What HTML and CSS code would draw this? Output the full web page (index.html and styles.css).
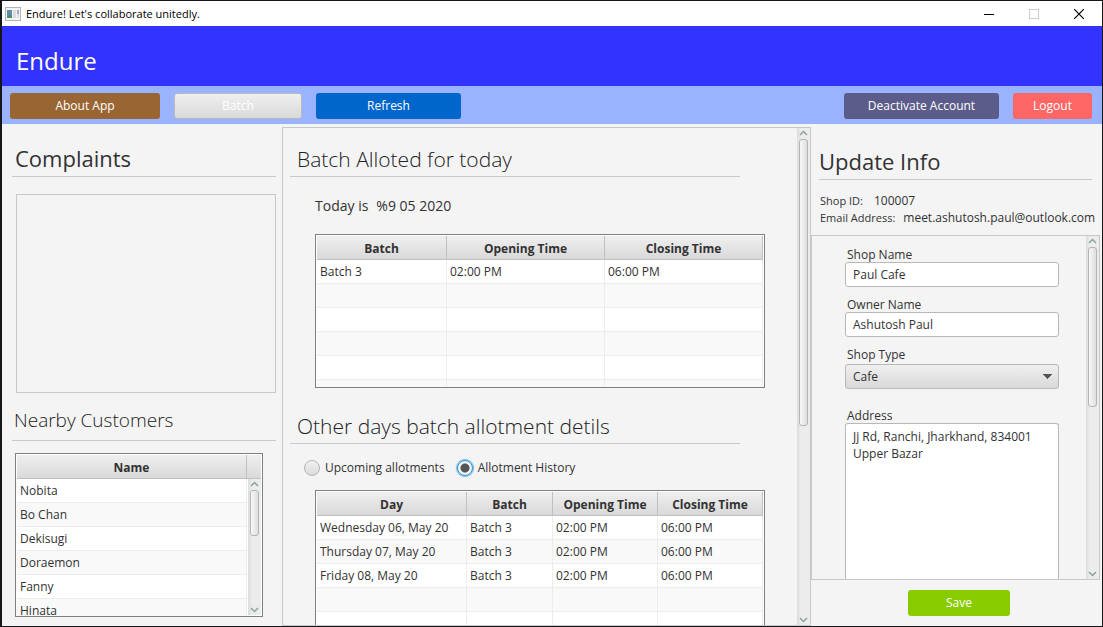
FILE: index.html
```html
<!DOCTYPE html>
<html lang="en">
<head>
<meta charset="utf-8">
<title>Endure! Let's collaborate unitedly.</title>
<link rel="stylesheet" href="styles.css">
</head>
<body>
<div class="window">
  <div class="titlebar">
    <svg class="app-icon" width="16" height="14" viewBox="0 0 16 14" aria-hidden="true">
      <rect x="0.5" y="0.5" width="15" height="13" fill="#f4f4f4" stroke="#b4b4b4"/>
      <rect x="2" y="3" width="5" height="8" fill="#5f8fa5"/>
      <path d="M2 11l3-4 2 2v2z" fill="#4d8f6a"/>
      <rect x="8" y="3" width="3" height="8" fill="#dcdcdc"/>
      <rect x="12" y="3" width="2" height="4" fill="#a9a4d6"/>
      <rect x="12" y="7" width="2" height="4" fill="#dedede"/>
    </svg>
    <span class="window-title">Endure! Let's collaborate unitedly.</span>
    <div class="window-controls">
      <button aria-label="Minimize"><svg width="10" height="10" viewBox="0 0 10 10"><path d="M0 5.5h10" stroke="#000"/></svg></button>
      <button aria-label="Maximize" disabled><svg width="10" height="10" viewBox="0 0 10 10"><rect x="0.5" y="0.5" width="9" height="9" fill="none" stroke="#ccc"/></svg></button>
      <button aria-label="Close"><svg width="10" height="10" viewBox="0 0 10 10"><path d="M0 0l10 10M10 0L0 10" stroke="#000" stroke-width="1.2"/></svg></button>
    </div>
  </div>
  <header class="brand"><h1>Endure</h1></header>
  <nav class="toolbar">
    <button class="btn btn-about">About App</button>
    <button class="btn btn-batch">Batch</button>
    <button class="btn btn-refresh">Refresh</button>
    <span class="spacer"></span>
    <button class="btn btn-deactivate">Deactivate Account</button>
    <button class="btn btn-logout">Logout</button>
  </nav>
  <main class="content">
    <section class="left">
      <h2 class="heading heading-large">Complaints</h2>
      <div class="complaints-box"></div>
      <h2 class="heading heading-nearby">Nearby Customers</h2>
      <div class="grid-box customers">
        <table class="grid">
          <thead><tr><th>Name</th></tr></thead>
          <tbody>
            <tr><td>Nobita</td></tr>
            <tr><td>Bo Chan</td></tr>
            <tr><td>Dekisugi</td></tr>
            <tr><td>Doraemon</td></tr>
            <tr><td>Fanny</td></tr>
            <tr><td>Hinata</td></tr>
          </tbody>
        </table>
        <div class="customers-side">
          <div class="corner"></div>
          <div class="scrollbar">
            <svg width="9" height="6" viewBox="0 0 9 6"><path d="M1 5l3.500-3.500L8 5"/></svg>
            <div class="track"><div class="thumb thumb-customers"></div></div>
            <svg width="9" height="6" viewBox="0 0 9 6"><path d="M1 1l3.500 3.500L8 1"/></svg>
          </div>
        </div>
      </div>
    </section>

    <section class="center">
      <div class="center-body">
        <h2 class="heading">Batch Alloted for today</h2>
        <p class="today"><span>Today is</span><span>%9 05 2020</span></p>
        <div class="grid-box today-grid">
          <table class="grid">
            <colgroup><col class="w-130"><col class="w-158"><col></colgroup>
            <thead><tr><th>Batch</th><th>Opening Time</th><th>Closing Time</th></tr></thead>
            <tbody>
              <tr><td>Batch 3</td><td>02:00 PM</td><td>06:00 PM</td></tr>
              <tr><td></td><td></td><td></td></tr>
              <tr><td></td><td></td><td></td></tr>
              <tr><td></td><td></td><td></td></tr>
              <tr><td></td><td></td><td></td></tr>
              <tr><td></td><td></td><td></td></tr>
            </tbody>
          </table>
        </div>
        <h2 class="heading heading-other">Other days batch allotment detils</h2>
        <div class="choices">
          <label><input type="radio" name="range">Upcoming allotments</label>
          <label><input type="radio" name="range" checked>Allotment History</label>
        </div>
        <div class="grid-box other-grid">
          <table class="grid">
            <colgroup><col class="w-150"><col class="w-86"><col class="w-105"><col></colgroup>
            <thead><tr><th>Day</th><th>Batch</th><th>Opening Time</th><th>Closing Time</th></tr></thead>
            <tbody>
              <tr><td>Wednesday 06, May 20</td><td>Batch 3</td><td>02:00 PM</td><td>06:00 PM</td></tr>
              <tr><td>Thursday 07, May 20</td><td>Batch 3</td><td>02:00 PM</td><td>06:00 PM</td></tr>
              <tr><td>Friday 08, May 20</td><td>Batch 3</td><td>02:00 PM</td><td>06:00 PM</td></tr>
              <tr><td></td><td></td><td></td><td></td></tr>
              <tr><td></td><td></td><td></td><td></td></tr>
            </tbody>
          </table>
        </div>
      </div>
      <div class="scrollbar">
        <svg width="9" height="6" viewBox="0 0 9 6"><path d="M1 5l3.500-3.500L8 5"/></svg>
        <div class="track"><div class="thumb thumb-center"></div></div>
        <svg width="9" height="6" viewBox="0 0 9 6"><path d="M1 1l3.500 3.500L8 1"/></svg>
      </div>
    </section>

    <section class="right">
      <h2 class="heading heading-large heading-update">Update Info</h2>
      <dl class="account">
        <div><dt>Shop ID:</dt><dd>100007</dd></div>
        <div><dt>Email Address:</dt><dd>meet.ashutosh.paul@outlook.com</dd></div>
      </dl>
      <div class="form-pane">
        <form class="form" id="shop-form">
          <label for="shop">Shop Name</label>
          <input id="shop" type="text" value="Paul Cafe">
          <label for="owner">Owner Name</label>
          <input id="owner" type="text" value="Ashutosh Paul">
          <label for="type">Shop Type</label>
          <select id="type"><option>Cafe</option></select>
          <label for="address" class="label-address">Address</label>
          <textarea id="address">Jj Rd, Ranchi, Jharkhand, 834001
Upper Bazar</textarea>
        </form>
        <div class="scrollbar">
          <svg width="9" height="6" viewBox="0 0 9 6"><path d="M1 5l3.500-3.500L8 5"/></svg>
          <div class="track"><div class="thumb thumb-form"></div></div>
          <svg width="9" height="6" viewBox="0 0 9 6"><path d="M1 1l3.500 3.500L8 1"/></svg>
        </div>
      </div>
      <div class="actions"><button class="btn btn-save" form="shop-form" type="button">Save</button></div>
    </section>
  </main>
</div>
</body>
</html>
```

FILE: styles.css
```css
* { box-sizing: border-box; }

body {
  margin: 0;
  color: #323232;
  font: 12px/16px "Open Sans", "Noto Sans", sans-serif;
}

button, input, select, textarea { font: inherit; color: inherit; }
h1, h2, p, dl, dd { margin: 0; font-weight: 400; }

.window {
  display: flex;
  flex-direction: column;
  height: 100vh;
  overflow: hidden;
  background: #f4f4f4;
  border: 1px solid #17171b;
  border-left-width: 2px;
}

.titlebar {
  flex: none;
  display: flex;
  align-items: center;
  height: 25px;
  padding: 0 1px 0 3px;
  background: #fff;
  color: #000;
  font-size: 11px;
}
.window-title { margin-left: 5px; }
.window-controls { display: flex; margin-left: auto; }
.window-controls button {
  display: grid;
  place-items: center;
  width: 45px;
  height: 24px;
  padding: 0;
  border: 0;
  background: none;
}

.brand {
  flex: none;
  height: 60px;
  padding: 18px 14px 0;
  background: #33f;
  color: #fff;
}
.brand h1 { font-size: 24px; line-height: 34px; }

.toolbar {
  flex: none;
  display: flex;
  gap: 14px;
  height: 38px;
  padding: 7px 10px 0 8px;
  background: #99b3ff;
}
.spacer { flex: 1; }

.btn {
  height: 26px;
  padding: 0;
  border: 0;
  border-radius: 3px;
  color: #fff;
}
.btn-about { width: 150px; background: #963; }
.btn-batch {
  width: 128px;
  border: 1px solid #bababa;
  background: linear-gradient(#efefef, #d9d9d9);
}
.btn-refresh { width: 145px; background: #06c; }
.btn-deactivate { width: 155px; background: #5c5c8a; }
.btn-logout { width: 79px; background: #f66; }
.btn-save { width: 102px; background: #8c0; }

.content {
  flex: 1;
  min-height: 0;
  display: grid;
  grid-template-columns: 280fr 529fr 291fr;
}

.heading {
  border-bottom: 1px solid #c8c8c8;
  color: #222;
  font-size: 21px;
  font-weight: 300;
  line-height: 32px;
}
.heading-large { font-size: 22px; font-weight: 400; color: #323232; }

.left {
  display: flex;
  flex-direction: column;
  min-height: 0;
  padding: 18px 6px 9px 10px;
}
.left .heading { padding: 0 3px 2px; }
.complaints-box {
  flex: none;
  height: 199px;
  margin: 17px 0 0 4px;
  border: 1px solid #c8c8c8;
}
.left .heading-nearby { margin-top: 11px; padding: 0 2px 4px; font-size: 19px; }

.grid-box {
  overflow: hidden;
  padding: 1px;
  border: 1px solid #808080;
  background: #fff;
}
.grid {
  width: 100%;
  border-collapse: separate;
  border-spacing: 0;
  table-layout: fixed;
}
.grid th {
  height: 24px;
  padding: 2px 0 0;
  border-right: 1px solid #c0c0c0;
  border-bottom: 1px solid #c0c0c0;
  background: linear-gradient(#efefef, #d9d9d9);
  font-weight: 700;
}
.grid td {
  height: 24px;
  padding: 0 3px;
  border-right: 1px solid #ededed;
  border-bottom: 1px solid #ededed;
  white-space: nowrap;
}
.grid tbody tr:nth-child(even) { background: #f9f9f9; }

.w-130 { width: 130px; }
.w-158 { width: 158px; }
.w-150 { width: 150px; }
.w-86 { width: 86px; }
.w-105 { width: 105px; }

.customers {
  flex: 1;
  display: flex;
  min-height: 0;
  margin: 12px 13px 0 3px;
}
.customers .grid { flex: 1; align-self: flex-start; }
.customers-side { display: flex; flex-direction: column; align-items: flex-end; width: 14px; }
.corner {
  width: 100%;
  height: 24px;
  border-bottom: 1px solid #c0c0c0;
  background: linear-gradient(#efefef, #d9d9d9);
}
.customers-side .scrollbar { flex: 1; }

.scrollbar {
  flex: none;
  display: flex;
  flex-direction: column;
  align-items: center;
  width: 13px;
  min-height: 0;
  padding: 2px 0;
  background: linear-gradient(90deg, #dcdcdc, #ececec 30%, #ececec);
}
.scrollbar svg { flex: none; fill: none; stroke: #8ba396; stroke-width: 1.5; }
.track { flex: 1; width: 9px; min-height: 0; padding: 3px 0; }
.thumb {
  border: 1px solid #b4b4b4;
  border-radius: 3px;
  background: linear-gradient(90deg, #f8f8f8, #dedede);
}
.thumb-customers { height: 46px; }
.thumb-center { height: 287px; }
.thumb-form { height: 160px; }

.center {
  display: flex;
  min-height: 0;
  margin-top: 3px;
  border: 1px solid #c8c8c8;
}
.center-body {
  flex: 1;
  display: flex;
  flex-direction: column;
  min-width: 0;
  overflow: hidden;
  padding: 15px 32px 0 7px;
}
.center .heading { margin-right: 25px; padding: 0 7px 1px; }
.today {
  display: flex;
  gap: 8px;
  margin: 18px 0 17px 25px;
  font-size: 14px;
  line-height: 22px;
}
.today-grid, .other-grid { flex: none; margin-left: 25px; }
.today-grid { height: 154px; }
.center .heading-other { margin-top: 22px; }
.choices {
  display: flex;
  gap: 12px;
  margin: 12px 0 10px 14px;
  line-height: 24px;
}
.choices label { display: flex; align-items: center; gap: 5px; }
.choices input {
  appearance: none;
  width: 16px;
  height: 16px;
  margin: 0;
  border: 1px solid #b4b4b4;
  border-radius: 50%;
  background: linear-gradient(#f0f0f0, #dcdcdc);
}
.choices input:checked {
  border-color: #2a8fd0;
  background: radial-gradient(circle, #555 4px, #f0f0f0 5px);
  box-shadow: 0 0 1px 1px #6ab8ea;
}

.right { display: flex; flex-direction: column; min-width: 0; min-height: 0; }
.heading-update { margin: 21px 10px 0 8px; padding-bottom: 2px; }
.account { padding: 12px 0 9px 9px; line-height: 17px; }
.account div { display: flex; gap: 8px; }
.account div:first-child { gap: 11px; }
.account dt { font-size: 11px; }
.form-pane {
  flex: 1;
  display: flex;
  min-height: 0;
  margin-right: 2px;
  border: 1px solid #c8c8c8;
}
.form {
  flex: 1;
  display: flex;
  flex-direction: column;
  min-width: 0;
  overflow: hidden;
  padding: 12px 27px 0 33px;
}
.form label { padding-left: 2px; line-height: 14px; }
.form input, .form select {
  flex: none;
  height: 25px;
  margin: 0 0 11px;
  padding: 0 7px;
  border: 1px solid #b8b8b8;
  border-radius: 3px;
  background: #fff;
}
.form select {
  appearance: none;
  margin-top: 2px;
  background:
    linear-gradient(45deg, transparent 50%, #555 50%) right 11px center / 5px 5px no-repeat,
    linear-gradient(-45deg, transparent 50%, #555 50%) right 6px center / 5px 5px no-repeat,
    linear-gradient(#efefef, #d9d9d9);
}
.form .label-address { margin-top: 9px; }
.form textarea {
  flex: 1;
  margin: 0;
  padding: 4px 7px;
  border: 1px solid #b8b8b8;
  border-bottom: 0;
  border-radius: 3px 3px 0 0;
  background: #fff;
  line-height: 17px;
  resize: none;
}
.actions { display: flex; justify-content: center; padding: 10px 0 10px 5px; }
```
